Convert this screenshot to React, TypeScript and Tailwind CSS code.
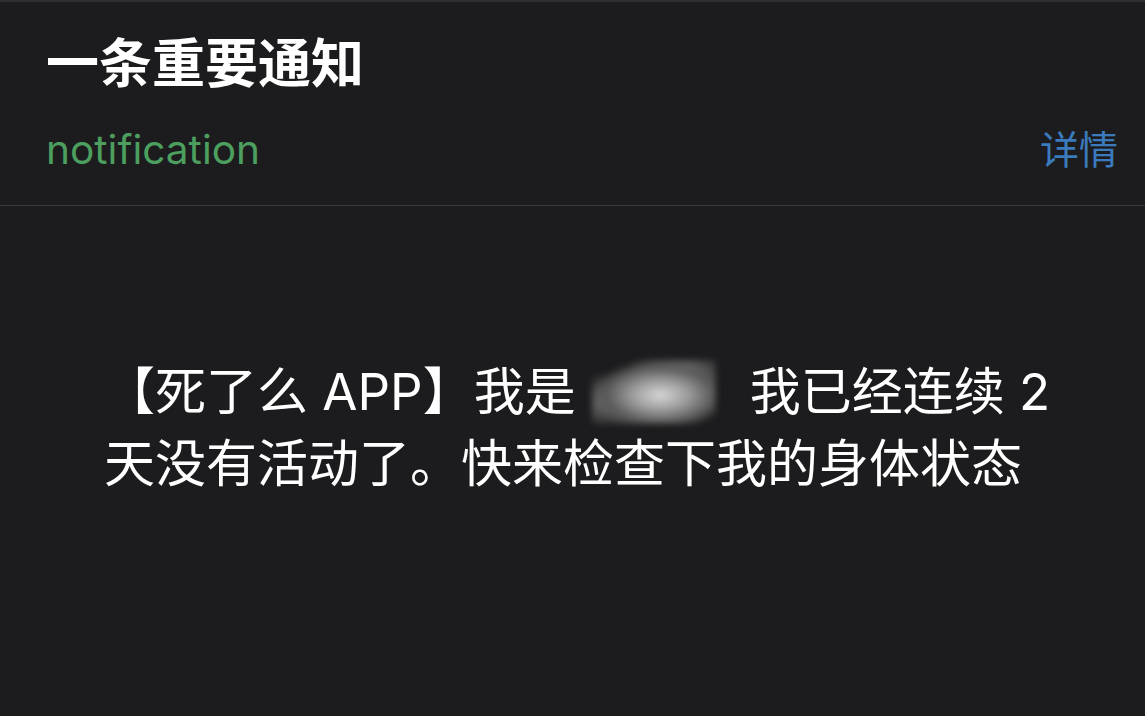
import React from 'react'

const cjk = "font-['Inter','Noto_Sans_CJK_SC',sans-serif]"

function Smudge() {
    // blurred-out name in the message
    return (
        <span className="inline-flex items-center w-[174px] h-[64px] align-middle -mt-[8px]">
            <span className="ml-[16px] w-[124px] h-[64px] blur-[3px] bg-[radial-gradient(ellipse_at_55%_55%,#d8d8d8_0%,#9a9a9a_30%,#5a5a5a_55%,transparent_72%),radial-gradient(ellipse_at_70%_25%,#8a8a8a_0%,transparent_45%),radial-gradient(ellipse_at_20%_65%,#7a7a7a_0%,transparent_50%)]" />
        </span>
    )
}

export default function App() {
    return (
        <div className={`w-full h-[716px] bg-[#1c1c1e] border-t-2 border-[#2e2e30] flex flex-col ${cjk}`}>
            {/* 头部 */}
            <div className="pl-[46px] pr-[27px] pt-[32px] pb-[31px] border-b border-[#38383a]">
                <div className="text-white text-[53px] font-bold leading-[60px]">一条重要通知</div>
                <div className="mt-[32px] flex items-center justify-between h-[48px]">
                    <div className="text-[#4c9f5e] text-[40.6px] leading-[48px]">notification</div>
                    <div className="text-[#3b7bbd] text-[39px] leading-[48px]">详情</div>
                </div>
            </div>
            {/* 内容 */}
            <div className="px-[104px] pt-[150px]">
                <div className="text-white text-[51px] leading-[72px] whitespace-nowrap">
                    【死了么 APP】我是<Smudge />我已经连续 2
                    <br />
                    天没有活动了。快来检查下我的身体状态
                </div>
            </div>
        </div>
    )
}
